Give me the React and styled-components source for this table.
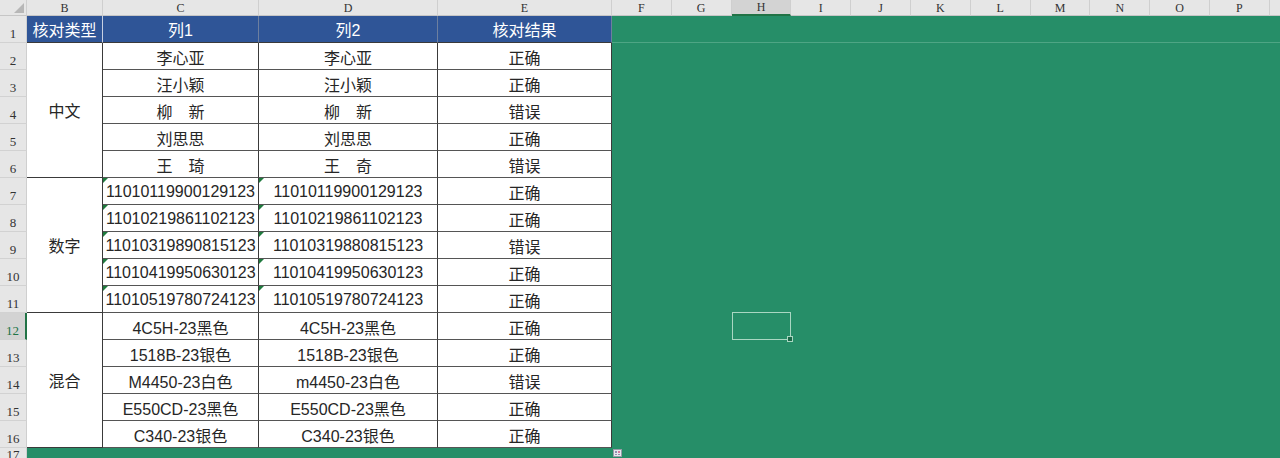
import React from 'react';
import styled, { createGlobalStyle } from 'styled-components';

const GlobalStyle = createGlobalStyle`
html, body {
    margin: 0;
    padding: 0;
    background: #ffffff;
}
`

// Q only peeks in at the right edge, its letter is off screen
const letters = ['B', 'C', 'D', 'E', 'F', 'G', 'H', 'I', 'J', 'K', 'L', 'M', 'N', 'O', 'P', ''];

const groups = [
    {
        name: '中文',
        rows: [
            ['李心亚', '李心亚', '正确'],
            ['汪小颖', '汪小颖', '正确'],
            ['柳　新', '柳　新', '错误'],
            ['刘思思', '刘思思', '正确'],
            ['王　琦', '王　奇', '错误'],
        ],
    },
    {
        name: '数字',
        flag: true,
        rows: [
            ['11010119900129123', '11010119900129123', '正确'],
            ['11010219861102123', '11010219861102123', '正确'],
            ['11010319890815123', '11010319880815123', '错误'],
            ['11010419950630123', '11010419950630123', '正确'],
            ['11010519780724123', '11010519780724123', '正确'],
        ],
    },
    {
        name: '混合',
        rows: [
            ['4C5H-23黑色', '4C5H-23黑色', '正确'],
            ['1518B-23银色', '1518B-23银色', '正确'],
            ['M4450-23白色', 'm4450-23白色', '错误'],
            ['E550CD-23黑色', 'E550CD-23黑色', '正确'],
            ['C340-23银色', 'C340-23银色', '正确'],
        ],
    },
];

const App = () => {
    let rowNo = 1;
    return (
        <React.Fragment>
            <GlobalStyle />
            <Sheet>
                <Corner><CornerMark /></Corner>
                {letters.map((l, i) => (
                    <ColHead key={i} col={i + 2} active={l === 'H'}>{l}</ColHead>
                ))}
                {Array.from({ length: 17 }, (_, i) => (
                    <RowHead key={i} row={i + 2} active={i + 1 === 12}>{i + 1}</RowHead>
                ))}

                <HeadCell col={2}>核对类型</HeadCell>
                <HeadCell col={3}>列1</HeadCell>
                <HeadCell col={4}>列2</HeadCell>
                <HeadCell col={5}>核对结果</HeadCell>

                {groups.map((g) => {
                    const start = rowNo + 2;
                    rowNo += g.rows.length;
                    return (
                        <React.Fragment key={g.name}>
                            <GroupCell style={{ gridRow: `${start} / span ${g.rows.length}` }}>{g.name}</GroupCell>
                            {g.rows.map((r, i) => (
                                <React.Fragment key={i}>
                                    <Cell row={start + i} col={3} flag={g.flag}>{r[0]}</Cell>
                                    <Cell row={start + i} col={4} flag={g.flag}>{r[1]}</Cell>
                                    <Cell row={start + i} col={5}>{r[2]}</Cell>
                                </React.Fragment>
                            ))}
                        </React.Fragment>
                    )
                })}

                <FillRule />
                <Selected><Handle /></Selected>
                <QuickSlot>
                    <QuickIcon>
                        <span /><span /><span /><span />
                    </QuickIcon>
                </QuickSlot>
            </Sheet>
        </React.Fragment>
    )
}

export default App;

const Sheet = styled.div`
width: 1280px;
height: 458px;
overflow: hidden;
display: grid;
grid-template-columns: 27px 76px 156px 179px 174px repeat(12, 59.8px);
grid-template-rows: 16px repeat(16, 27px) 1fr;
background: #268e68;
font-family: "Liberation Sans", "Noto Sans CJK SC", sans-serif;
`

const Corner = styled.div`
grid-row: 1;
grid-column: 1;
background: #e6e6e6;
border-right: 1px solid #cfcfcf;
border-bottom: 1px solid #c6c6c6;
position: relative;
`

const CornerMark = styled.div`
position: absolute;
right: 2px;
bottom: 2px;
width: 0;
height: 0;
border-left: 10px solid transparent;
border-bottom: 10px solid #b7b7b7;
`

const ColHead = styled.div`
grid-row: 1;
grid-column: ${p => p.col};
background: ${p => p.active ? '#d3d3d3' : '#e6e6e6'};
border-right: 1px solid #cfcfcf;
border-bottom: ${p => p.active ? '2px solid #217346' : '1px solid #c6c6c6'};
color: #333;
font-family: "Liberation Serif", serif;
font-size: 12px;
display: flex;
align-items: center;
justify-content: center;
box-sizing: border-box;
line-height: 1;
`

const RowHead = styled.div`
grid-row: ${p => p.row};
grid-column: 1;
background: ${p => p.active ? '#d3d3d3' : '#e6e6e6'};
border-bottom: 1px solid #d2d2d2;
border-right: ${p => p.active ? '2px solid #217346' : '1px solid #cfcfcf'};
color: ${p => p.active ? '#217346' : '#333'};
font-family: "Liberation Serif", serif;
font-size: 13px;
display: flex;
align-items: flex-end;
justify-content: center;
padding-bottom: 2px;
box-sizing: border-box;
line-height: 1;
`

const HeadCell = styled.div`
grid-row: 2;
grid-column: ${p => p.col};
background: #2f5597;
color: #ffffff;
font-size: 16px;
display: flex;
align-items: center;
justify-content: center;
border-right: 1px solid ${p => p.col === 2 ? '#c7d0e2' : '#6d7f9f'};
border-bottom: 1px solid #3a3a3a;
box-sizing: border-box;
`

const GroupCell = styled.div`
grid-column: 2;
background: #ffffff;
color: #262626;
font-size: 16px;
display: flex;
align-items: center;
justify-content: center;
border-right: 1px solid #3a3a3a;
border-bottom: 1px solid #3a3a3a;
box-sizing: border-box;
`

const Cell = styled.div`
grid-row: ${p => p.row};
grid-column: ${p => p.col};
position: relative;
background: #ffffff;
color: #262626;
font-size: 16px;
white-space: nowrap;
display: flex;
align-items: center;
justify-content: center;
border-right: 1px solid #3a3a3a;
border-bottom: 1px solid #555;
box-sizing: border-box;
padding-top: 1px;

&::before {
    content: '';
    display: ${p => p.flag ? 'block' : 'none'};
    position: absolute;
    left: 0;
    top: 0;
    border-top: 5px solid #1f7a3e;
    border-right: 5px solid transparent;
}
`

const FillRule = styled.div`
grid-row: 2;
grid-column: 6 / -1;
border-bottom: 1px solid #4ea584;
`

const Selected = styled.div`
grid-row: 13;
grid-column: 8;
position: relative;
border: 1px solid #a9d7c2;
margin: -1px 0 0 0;
box-sizing: border-box;
`

const Handle = styled.div`
position: absolute;
right: -3px;
bottom: -3px;
width: 4px;
height: 4px;
background: #1c6a49;
border: 1px solid #a9d7c2;
`

const QuickSlot = styled.div`
grid-row: 18;
grid-column: 6;
padding: 1px 0 0 1px;
`

const QuickIcon = styled.div`
width: 9px;
height: 8px;
background: #e8e8ee;
border: 1px solid #9a9aa8;
box-sizing: border-box;
display: grid;
grid-template-columns: 1fr 1fr;
gap: 1px;
padding: 1px;

span {
    background: #8f8fb0;
}
span:nth-child(2) {
    background: #d77aa0;
}
`
